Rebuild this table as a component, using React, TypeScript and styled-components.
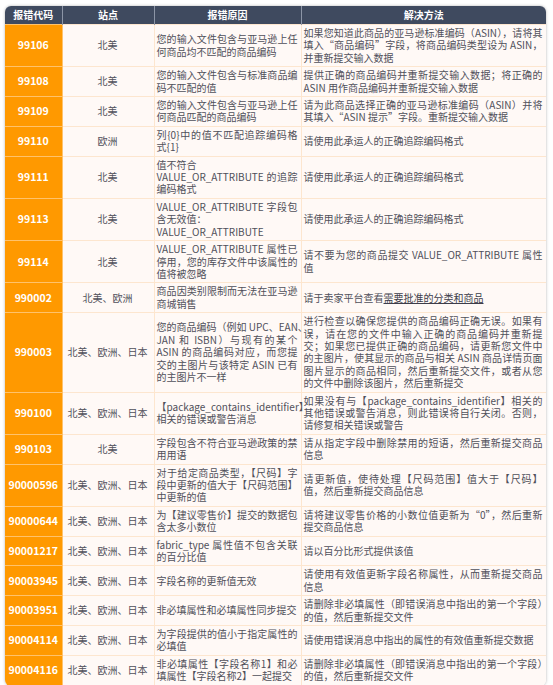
import styled, { createGlobalStyle } from "styled-components";

const GlobalStyle = createGlobalStyle`
  html, body {
    margin: 0;
    padding: 0;
    background: #fff;
  }
  body {
    font-family: "Noto Sans CJK SC", "Noto Sans", sans-serif;
  }
`;

const Page = styled.div`
  padding: 6px 7px 0 5px;
`;

const Card = styled.div`
  width: 541px;
  border-radius: 6px;
  overflow: hidden;
  box-shadow: 0 0 3px rgba(0, 0, 0, 0.3);
`;

const Table = styled.table`
  width: 541px;
  table-layout: fixed;
  border-collapse: collapse;
  font-size: 10px;
  line-height: 12.4px;
`;

const HeadCell = styled.th`
  background: #3f4a5f;
  color: #fff;
  font-weight: 700;
  text-align: center;
  padding: 3px 2px;
  line-height: 12px;
  border-left: 1px solid #8c95a6;
  &:first-child {
    border-left: none;
  }
`;

const Cell = styled.td<{ $align?: "center" | "justify" }>`
  background: #fff9f6;
  color: #50505a;
  padding: 2px 3px 2px 2px;
  border: 1px solid #fde6cf;
  vertical-align: middle;
  text-align: ${(p) => p.$align ?? "justify"};
`;

const CodeCell = styled.td`
  background: #ff9900;
  color: #fff;
  font-weight: 700;
  font-size: 10.5px;
  text-align: center;
  padding: 2px;
  border: 1px solid #ffc26b;
  border-left: none;
`;

const Link = styled.span`
  color: #3d3d4a;
  text-decoration: underline;
`;

const NoWrap = styled.span`
  white-space: nowrap;
`;

type Row = {
  code: string;
  site: string;
  reason: React.ReactNode;
  fix: React.ReactNode;
};

const NA_EU_JP = "北美、欧洲、日本";

const rows: Row[] = [
  {
    code: "99106",
    site: "北美",
    reason: "您的输入文件包含与亚马逊上任何商品均不匹配的商品编码",
    fix: "如果您知道此商品的亚马逊标准编码（ASIN），请将其填入“商品编码”字段，将商品编码类型设为 ASIN，并重新提交输入数据",
  },
  {
    code: "99108",
    site: "北美",
    reason: "您的输入文件包含与标准商品编码不匹配的值",
    fix: "提供正确的商品编码并重新提交输入数据；将正确的 ASIN 用作商品编码并重新提交输入数据",
  },
  {
    code: "99109",
    site: "北美",
    reason: "您的输入文件包含与亚马逊上任何商品匹配的商品编码",
    fix: "请为此商品选择正确的亚马逊标准编码（ASIN）并将其填入“ASIN 提示”字段。重新提交输入数据",
  },
  {
    code: "99110",
    site: "欧洲",
    reason: "列{0}中的值不匹配追踪编码格式{1}",
    fix: "请使用此承运人的正确追踪编码格式",
  },
  {
    code: "99111",
    site: "北美",
    reason: (
      <>
        值不符合
        <br />
        VALUE_OR_ATTRIBUTE 的追踪编码格式
      </>
    ),
    fix: "请使用此承运人的正确追踪编码格式",
  },
  {
    code: "99113",
    site: "北美",
    reason: (
      <>
        VALUE_OR_ATTRIBUTE 字段包含无效值：
        <br />
        VALUE_OR_ATTRIBUTE
      </>
    ),
    fix: "请使用此承运人的正确追踪编码格式",
  },
  {
    code: "99114",
    site: "北美",
    reason: "VALUE_OR_ATTRIBUTE 属性已停用，您的库存文件中该属性的值将被忽略",
    fix: "请不要为您的商品提交 VALUE_OR_ATTRIBUTE 属性值",
  },
  {
    code: "990002",
    site: "北美、欧洲",
    reason: "商品因类别限制而无法在亚马逊商城销售",
    fix: (
      <>
        请于卖家平台查看<Link>需要批准的分类和商品</Link>
      </>
    ),
  },
  {
    code: "990003",
    site: NA_EU_JP,
    reason: (
      <>
        <NoWrap>您的商品编码（例如 UPC、EAN、</NoWrap>
        <br />
        JAN 和 ISBN）与现有的某个 ASIN 的商品编码对应，而您提交的主图片与该特定 ASIN
        已有的主图片不一样
      </>
    ),
    fix: "进行检查以确保您提供的商品编码正确无误。如果有误，请在您的文件中输入正确的商品编码并重新提交；如果您已提供正确的商品编码，请更新您文件中的主图片，使其显示的商品与相关 ASIN 商品详情页面图片显示的商品相同，然后重新提交文件，或者从您的文件中删除该图片，然后重新提交",
  },
  {
    code: "990100",
    site: NA_EU_JP,
    reason: "【package_contains_identifier】相关的错误或警告消息",
    fix: "如果没有与【package_contains_identifier】相关的其他错误或警告消息，则此错误将自行关闭。否则，请修复相关错误或警告",
  },
  {
    code: "990103",
    site: "北美",
    reason: "字段包含不符合亚马逊政策的禁用用语",
    fix: "请从指定字段中删除禁用的短语，然后重新提交商品信息",
  },
  {
    code: "90000596",
    site: NA_EU_JP,
    reason: "对于给定商品类型，【尺码】字段中更新的值大于【尺码范围】中更新的值",
    fix: "请更新值，使待处理【尺码范围】值大于【尺码】值，然后重新提交商品信息",
  },
  {
    code: "90000644",
    site: NA_EU_JP,
    reason: "为【建议零售价】提交的数据包含太多小数位",
    fix: "请将建议零售价格的小数位值更新为“0”，然后重新提交商品信息",
  },
  {
    code: "90001217",
    site: NA_EU_JP,
    reason: "fabric_type 属性值不包含关联的百分比值",
    fix: "请以百分比形式提供该值",
  },
  {
    code: "90003945",
    site: NA_EU_JP,
    reason: "字段名称的更新值无效",
    fix: "请使用有效值更新字段名称属性，从而重新提交商品信息",
  },
  {
    code: "90003951",
    site: NA_EU_JP,
    reason: "非必填属性和必填属性同步提交",
    fix: "请删除非必填属性（即错误消息中指出的第一个字段）的值，然后重新提交文件",
  },
  {
    code: "90004114",
    site: NA_EU_JP,
    reason: "为字段提供的值小于指定属性的必填值",
    fix: "请使用错误消息中指出的属性的有效值重新提交数据",
  },
  {
    code: "90004116",
    site: NA_EU_JP,
    reason: "非必填属性【字段名称1】和必填属性【字段名称2】一起提交",
    fix: "请删除非必填属性（即错误消息中指出的第一个字段）的值，然后重新提交文件",
  },
];

export default function App() {
  return (
    <Page>
      <GlobalStyle />
      <Card>
        <Table>
          <colgroup>
            <col style={{ width: 57 }} />
            <col style={{ width: 92 }} />
            <col style={{ width: 147 }} />
            <col style={{ width: 245 }} />
          </colgroup>
          <thead>
            <tr>
              <HeadCell>报错代码</HeadCell>
              <HeadCell>站点</HeadCell>
              <HeadCell>报错原因</HeadCell>
              <HeadCell>解决方法</HeadCell>
            </tr>
          </thead>
          <tbody>
            {rows.map((r) => (
              <tr key={r.code}>
                <CodeCell>{r.code}</CodeCell>
                <Cell $align="center">{r.site}</Cell>
                <Cell>{r.reason}</Cell>
                <Cell>{r.fix}</Cell>
              </tr>
            ))}
          </tbody>
        </Table>
      </Card>
    </Page>
  );
}
